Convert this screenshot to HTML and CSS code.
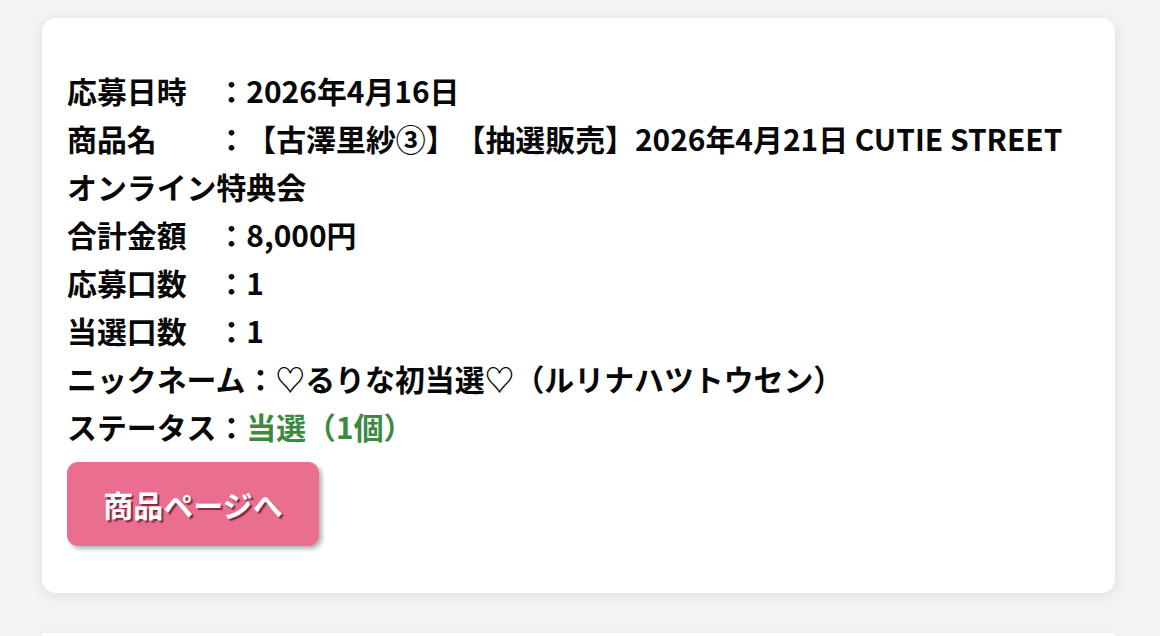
FILE: index.html
```html
<!DOCTYPE html>
<html lang="ja">
<head>
<meta charset="utf-8">
<link rel="stylesheet" href="styles.css">
</head>
<body>
<div class="page">
  <div class="card">
    <div class="info">
      <p class="row">応募日時　：2026年4月16日</p>
      <p class="row">商品名　　：【古澤里紗③】【抽選販売】2026年4月21日 CUTIE STREET オンライン特典会</p>
      <p class="row">合計金額　：8,000円</p>
      <p class="row">応募口数　：1</p>
      <p class="row">当選口数　：1</p>
      <p class="row">ニックネーム：♡るりな初当選♡（ルリナハツトウセン）</p>
      <p class="row">ステータス：<span class="win">当選（1個）</span></p>
    </div>
    <a class="btn" href="#">商品ページへ</a>
  </div>
  <div class="card next"></div>
</div>
</body>
</html>
```
FILE: styles.css
```css
html, body {
  margin: 0;
  padding: 0;
  background: #f3f3f3;
  overflow: hidden;
}
.page {
  width: 1160px;
  height: 636px;
  padding: 18px 0 0 42px;
  box-sizing: border-box;
  display: flex;
  flex-direction: column;
  gap: 40px;
  overflow: hidden;
}
.card {
  width: 1073px;
  box-sizing: border-box;
  background: #fff;
  border-radius: 14px;
  box-shadow: 0 2px 14px rgba(0, 0, 0, 0.09);
  padding: 48px 25px 47px 25px;
  font-family: "Noto Sans CJK JP", "Noto Sans", sans-serif;
  font-weight: 700;
  color: #080808;
  text-spacing-trim: space-all;
}
.card.next {
  height: 3px;
  padding: 0;
  flex-shrink: 0;
}
.info {
  font-size: 29.9px;
  line-height: 48px;
  word-break: keep-all;
}
.row {
  margin: 0;
}
.win {
  color: #3b8a3f;
}
.btn {
  display: inline-flex;
  align-items: center;
  justify-content: center;
  margin-top: 12px;
  width: 252px;
  height: 84px;
  border-radius: 11px;
  background: #ea6f8f;
  color: #fff;
  text-decoration: none;
  font-size: 30px;
  text-shadow: 2px 2px 1px rgba(90, 20, 40, 0.75);
  box-shadow: 3px 3px 4px rgba(0, 0, 0, 0.3);
}
```
